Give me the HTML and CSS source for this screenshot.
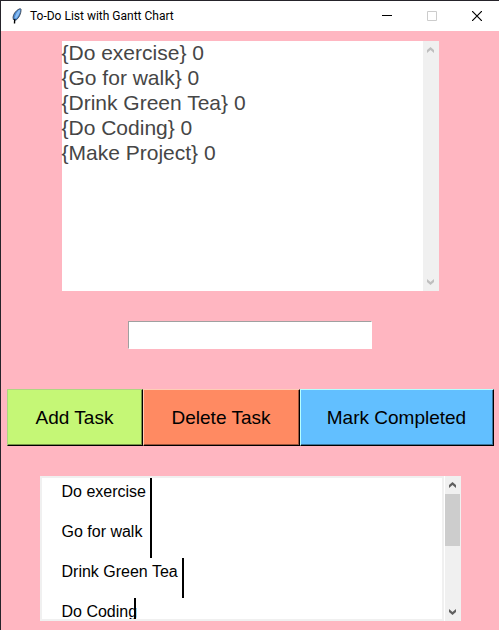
FILE: index.html
```html
<!DOCTYPE html>
<html lang="en">
<head>
<meta charset="utf-8">
<title>To-Do List with Gantt Chart</title>
<link rel="stylesheet" href="styles.css">
</head>
<body>
<div class="window">
  <header class="titlebar">
    <svg class="feather" width="16" height="16" viewBox="0 0 16 16" aria-hidden="true">
      <path d="M11.500 0.500C8 1.500 4.500 5 4 9.500L4.500 12L6.500 12.500C9.500 11 12 6 12 1.500Z" fill="#4a8ad4"/>
      <path d="M11.500 1.200C8.500 2.500 6.500 6 5.500 10.500L7.500 10C9.500 8 11 5 11.500 1.200Z" fill="#8abdf2"/>
      <path d="M11.500 0.500C8 1.500 4.500 5 4 9.500L4.500 12M12 1C12.500 5 9.500 11 6.500 12.300" fill="none" stroke="#2b3440" stroke-width="0.800"/>
      <path d="M6 11C5.500 12 5.500 13 5.500 15.500" fill="none" stroke="#000" stroke-width="1.400"/>
    </svg>
    <h1 class="title">To-Do List with Gantt Chart</h1>
    <button class="caption" aria-label="Minimize"><svg width="10" height="10" viewBox="0 0 10 10" shape-rendering="crispEdges"><path d="M0 4h10v1H0z"/></svg></button>
    <button class="caption" aria-label="Maximize" disabled><svg width="10" height="10" viewBox="0 0 10 10"><path d="M.5.5h9v9h-9z" fill="none" stroke="#ccc"/></svg></button>
    <button class="caption" aria-label="Close"><svg width="10" height="10" viewBox="0 0 10 10"><path d="M0 0l10 10M10 0L0 10" fill="none" stroke="#000" stroke-width="1.200"/></svg></button>
  </header>
  <main class="content">
    <section class="listbox" aria-label="Tasks">
      <ul class="tasks">
        <li>{Do exercise} 0</li>
        <li>{Go for walk} 0</li>
        <li>{Drink Green Tea} 0</li>
        <li>{Do Coding} 0</li>
        <li>{Make Project} 0</li>
      </ul>
      <div class="scrollbar idle">
        <button class="arrow" aria-label="Scroll tasks up" disabled><svg width="8" height="6" viewBox="0 0 8 6"><path d="M0 3L3.500 0L7 3V6L3.500 3L0 6Z"/></svg></button>
        <button class="arrow" aria-label="Scroll tasks down" disabled><svg width="8" height="6" viewBox="0 0 8 6"><path d="M0 0L3.500 3L7 0V3L3.500 6L0 3Z"/></svg></button>
      </div>
    </section>
    <input class="entry" type="text" aria-label="New task">
    <div class="actions">
      <button class="action add">Add Task</button>
      <button class="action delete">Delete Task</button>
      <button class="action complete">Mark Completed</button>
    </div>
    <section class="chart" aria-label="Gantt chart">
      <div class="canvas">
        <div class="row"><span class="label">Do exercise</span><span class="bar" style="margin-left: 108px"></span></div>
        <div class="row"><span class="label">Go for walk</span><span class="bar" style="margin-left: 108px"></span></div>
        <div class="row"><span class="label">Drink Green Tea</span><span class="bar" style="margin-left: 140px"></span></div>
        <div class="row"><span class="label">Do Coding</span><span class="bar" style="margin-left: 92px"></span></div>
      </div>
      <div class="scrollbar">
        <button class="arrow" aria-label="Scroll chart up"><svg width="8" height="6" viewBox="0 0 8 6"><path d="M0 3L3.500 0L7 3V6L3.500 3L0 6Z"/></svg></button>
        <div class="thumb"></div>
        <button class="arrow" aria-label="Scroll chart down"><svg width="8" height="6" viewBox="0 0 8 6"><path d="M0 0L3.500 3L7 0V3L3.500 6L0 3Z"/></svg></button>
      </div>
    </section>
  </main>
</div>
</body>
</html>
```
FILE: styles.css
```css
* { box-sizing: border-box; }
body {
  margin: 0;
  background: #ffb6c1;
  font-family: "Liberation Sans", Arial, sans-serif;
  color: #000;
}
.window {
  min-height: 100vh;
  border-top: 1px solid #25232a;
  border-left: 1px solid #25232a;
}
.titlebar {
  display: flex;
  align-items: center;
  height: 30px;
  padding-left: 8px;
  background: #fff;
}
.title {
  flex: 1;
  margin: 0 0 0 5px;
  font: 400 12px/16px Roboto, sans-serif;
}
.caption {
  display: flex;
  align-items: center;
  justify-content: center;
  width: 45px;
  height: 30px;
  padding: 0;
  border: 0;
  background: none;
}
.content {
  display: flex;
  flex-direction: column;
  align-items: center;
  gap: 30px;
  padding-top: 10px;
}
.listbox {
  display: flex;
  width: 377px;
  height: 250px;
  background: #fff;
}
.tasks {
  flex: 1;
  margin: 0;
  padding: 0;
  list-style: none;
  font-size: 21px;
  line-height: 23px;
  color: #464646;
}
.tasks li { padding-bottom: 2px; }
.scrollbar {
  display: flex;
  flex-direction: column;
  width: 16px;
  background: #f0f0f0;
}
.arrow {
  display: flex;
  align-items: center;
  justify-content: center;
  width: 16px;
  height: 18px;
  padding: 0;
  border: 0;
  background: none;
}
.arrow:last-child { margin-top: auto; }
.arrow path { fill: #606060; }
.idle .arrow path { fill: #bfbfbf; }
.thumb {
  height: 52px;
  margin-right: 1px;
  background: #cdcdcd;
}
.entry {
  width: 244px;
  height: 28px;
  padding: 0 2px;
  border: 1px solid;
  border-color: #a0a0a0 #fff #fff #a0a0a0;
  background: #fff;
  font: 20px "Liberation Sans", Arial, sans-serif;
}
.entry:focus { outline: none; }
.actions {
  display: flex;
  margin-top: 10px;
}
.action {
  height: 57px;
  padding: 0 25px;
  border: 1px solid;
  font: 19px "Liberation Sans", Arial, sans-serif;
  color: #000;
}
.add {
  width: 136px;
  background: #c5f776;
  border-color: #aed581 #000 #000 #aed581;
  box-shadow: inset -1px -1px #769447;
}
.delete {
  width: 157px;
  background: #ff8a62;
  border-color: #ffcdb5 #000 #000 #ffcdb5;
  box-shadow: inset -1px -1px #99533b;
}
.complete {
  width: 194px;
  background: #62bfff;
  border-color: #b5ffff #000 #000 #b5ffff;
  box-shadow: inset -1px -1px #3b7399;
}
.chart {
  display: flex;
  gap: 1px;
  width: 421px;
  height: 145px;
  background: #fff;
}
.canvas {
  flex: 1;
  overflow: hidden;
  border: 2px solid #f0f0f0;
}
.row {
  display: grid;
  height: 40px;
}
.row > * { grid-area: 1 / 1; }
.label {
  padding: 5px 0 0 20px;
  font-size: 16px;
  line-height: 18px;
}
.bar {
  width: 2px;
  background: #000;
}
```
